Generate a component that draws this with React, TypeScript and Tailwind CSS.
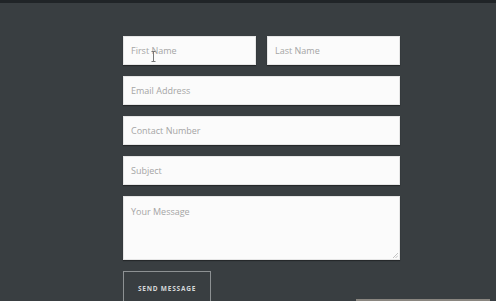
import React from "react";

const field =
  "w-full h-[29px] bg-[#fbfbfb] px-2 text-[9px] text-[#555] placeholder:text-[#a5a5a5] outline-none border border-[#e6e6e6] shadow-[0_1px_1px_rgba(0,0,0,0.35)]";

export default function App() {
  return (
    <div
      className="relative w-[496px] h-[301px] bg-[#393e41] overflow-hidden flex flex-col"
      style={{ fontFamily: "'Open Sans', 'Liberation Sans', sans-serif" }}
    >
      <div className="h-[3px] bg-[#202427] shrink-0" />
      <form className="ml-[123px] mt-[33px] w-[277px] flex flex-col gap-[11px]">
        <div className="flex gap-[11px]">
          <div className="relative flex-1">
            <input className={`${field} pl-[7px]`} placeholder="First Name" />
            {/* mouse text cursor */}
            <svg className="absolute left-[28px] top-[15px]" width="5" height="11" viewBox="0 0 5 11">
              <path d="M0.5 0.5h4M2.5 0.5v10M0.5 10.5h4" stroke="#777" strokeWidth="1" fill="none" />
            </svg>
          </div>
          <div className="flex-1">
            <input className={`${field} pl-[7px]`} placeholder="Last Name" />
          </div>
        </div>
        <input className={`${field} pl-[7px]`} placeholder="Email Address" />
        <input className={`${field} pl-[7px]`} placeholder="Contact Number" />
        <input className={`${field} pl-[7px]`} placeholder="Subject" />
        <div className="relative">
          <textarea
            className="block w-full h-[64px] resize-none bg-[#fbfbfb] pl-[7px] pr-2 py-2 text-[9px] text-[#555] placeholder:text-[#a5a5a5] outline-none border border-[#e6e6e6] shadow-[0_1px_1px_rgba(0,0,0,0.35)]"
            placeholder="Your Message"
          />
          <svg className="absolute right-[2px] bottom-[2px]" width="5" height="5" viewBox="0 0 5 5">
            <path d="M5 0L0 5M5 2.5L2.5 5" stroke="#b5b5b5" strokeWidth="0.8" />
          </svg>
        </div>
        <div>
          <button
            type="button"
            className="w-[88px] h-[36px] border border-[#8d9193] text-[6.5px] font-bold tracking-[0.12em] text-[#d6d8d9] bg-transparent"
          >
            SEND MESSAGE
          </button>
        </div>
      </form>
      <div className="absolute left-[356px] bottom-0 w-[134px] h-[2px] bg-[#8a8680]" />
    </div>
  );
}
